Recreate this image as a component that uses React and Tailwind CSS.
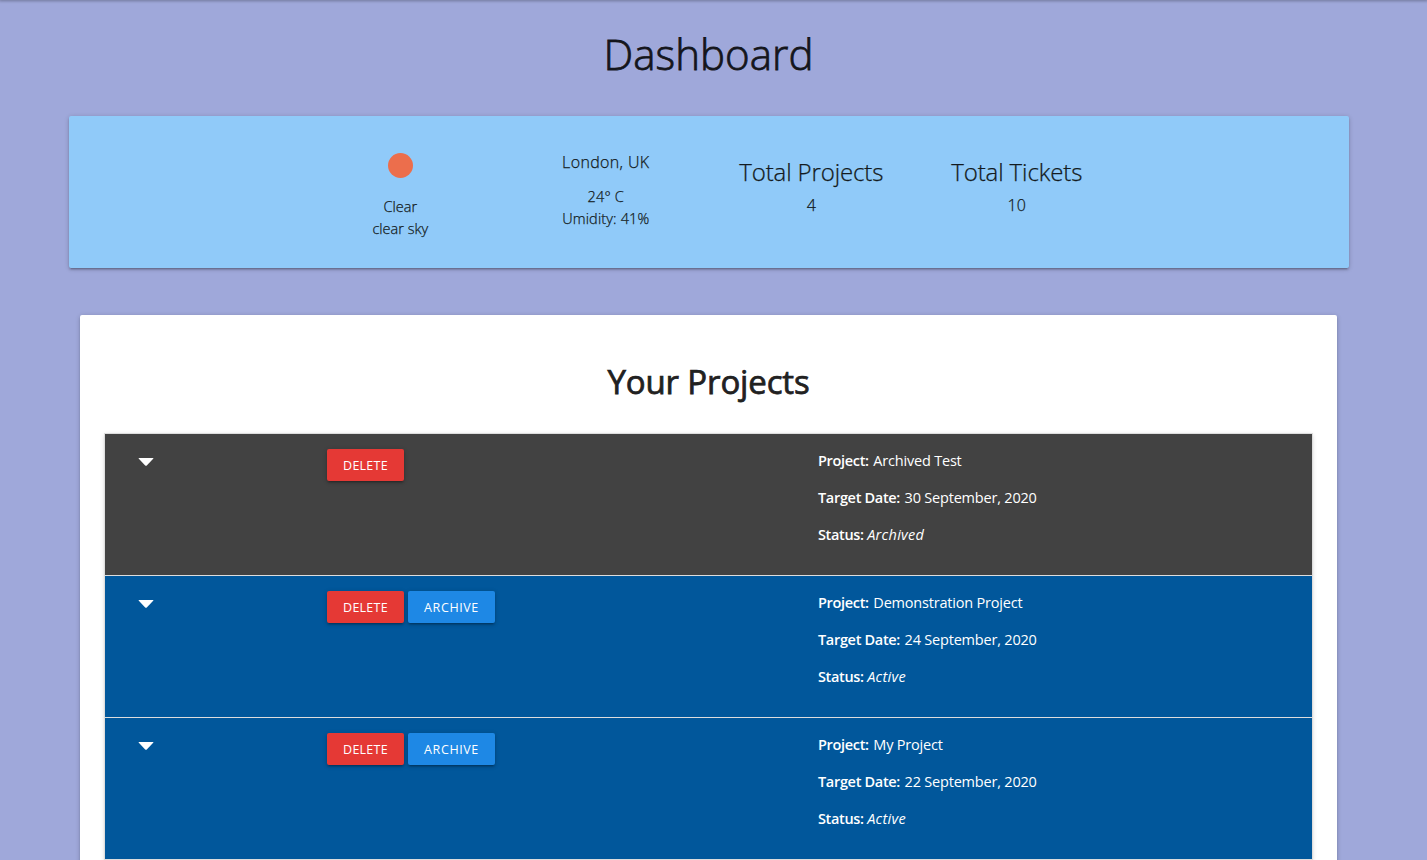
const projects = [
  { name: "Archived Test", date: "30 September, 2020", status: "Archived" },
  { name: "Demonstration Project", date: "24 September, 2020", status: "Active" },
  { name: "My Project", date: "22 September, 2020", status: "Active" },
];

const raised =
  "shadow-[0_2px_2px_0_rgba(0,0,0,0.14),0_3px_1px_-2px_rgba(0,0,0,0.12),0_1px_5px_0_rgba(0,0,0,0.2)]";

function ActionButton({ color, children }) {
  return (
    <button
      className={`flex h-8 items-center justify-center rounded-xs pt-[2px] text-[12.5px] text-white ${raised} ${color}`}
    >
      {children}
    </button>
  );
}

function Total({ label, value }) {
  return (
    <div className="w-[205.5px] pt-[40px] text-center">
      <h2 className="text-[24px] leading-8 tracking-[-0.12px] whitespace-nowrap">{label}</h2>
      <p className="text-[16px] leading-[34px]">{value}</p>
    </div>
  );
}

function ProjectRow({ project }) {
  const archived = project.status === "Archived";
  return (
    <li
      className={`flex h-[142px] border-b border-[#dddddd] pt-[15px] text-white ${
        archived ? "bg-[#424242]" : "bg-[#01579b]"
      }`}
    >
      <div className="w-[222px] pt-[9px] pl-[33px]">
        <svg width="16" height="8" viewBox="0 0 16 8" fill="currentColor">
          <path d="M1 0H15Q15.8 0.1 15.2 0.8L8.8 7.4Q8 8.2 7.2 7.4L0.8 0.8Q0.2 0.1 1 0Z" />
        </svg>
      </div>
      <div className="flex w-[491px] items-start gap-1">
        <ActionButton color="w-[77px] bg-[#e53935] tracking-[0.25px]">DELETE</ActionButton>
        {!archived && <ActionButton color="w-[87px] bg-[#1e88e5] tracking-[0.6px]">ARCHIVE</ActionButton>}
      </div>
      <div className="flex flex-col gap-[15px] pt-px text-[14.5px] leading-[22px] tracking-[-0.2px] whitespace-nowrap">
        <p>
          <b className="mr-px font-semibold tracking-[-0.32px]">Project:</b> {project.name}
        </p>
        <p>
          <b className="mr-px font-semibold tracking-[-0.32px]">Target Date:</b> {project.date}
        </p>
        <p>
          <b className="font-semibold tracking-[-0.36px]">Status:</b>{" "}
          <i className="tracking-[0.3px]">{project.status}</i>
        </p>
      </div>
    </li>
  );
}

export default function App() {
  return (
    <div className="h-[860px] w-full overflow-hidden bg-[#9fa8da] font-['Open_Sans',sans-serif] text-[#212121]">
      <div className="h-0 shadow-[0_0_3px_1px_rgba(0,0,0,0.36)]" />
      <main className="w-[1417px] pt-px">
        <h1 className="h-[115px] pt-[24px] text-center text-[42px] leading-[58px] font-light tracking-[0.05px] text-[#14151b] [-webkit-text-stroke:0.8px_#14151b]">
          Dashboard
        </h1>
        <section
          className={`ml-[69px] flex h-[152px] w-[1280px] rounded-xs bg-[#90caf9] pl-[228.5px] font-light text-[#131a20] [-webkit-text-stroke:0.25px_#131a20] ${raised}`}
        >
          <div className="w-[205.5px] pt-[37px] text-center text-[14.5px] leading-[22px]">
            <div className="mx-auto mb-[18px] size-[25px] rounded-full bg-[#ec6e4c]" />
            <p>Clear</p>
            <p>clear sky</p>
          </div>
          <div className="w-[205.5px] pt-[34px] text-center">
            <h3 className="text-[16px] leading-6 tracking-[0.35px]">London, UK</h3>
            <div className="mt-[12px] text-[14.5px] leading-[22px] tracking-[0.15px]">
              <p>24° C</p>
              <p>Umidity: 41%</p>
            </div>
          </div>
          <Total label="Total Projects" value="4" />
          <Total label="Total Tickets" value="10" />
        </section>
        <section className={`mt-[47px] ml-[80px] h-[600px] w-[1257px] rounded-xs bg-white px-[25px] pt-[44px] ${raised}`}>
          <h2 className="h-[75px] text-center text-[33px] leading-[46px] font-normal tracking-[-0.15px] [-webkit-text-stroke:0.75px_#212121]">
            Your Projects
          </h2>
          <ul className="w-[1207px] shadow-[0_0_0_1px_#dddddd,0_2px_2px_0_rgba(0,0,0,0.14),0_1px_5px_0_rgba(0,0,0,0.2)]">
            {projects.map((project) => (
              <ProjectRow key={project.name} project={project} />
            ))}
          </ul>
        </section>
      </main>
    </div>
  );
}
